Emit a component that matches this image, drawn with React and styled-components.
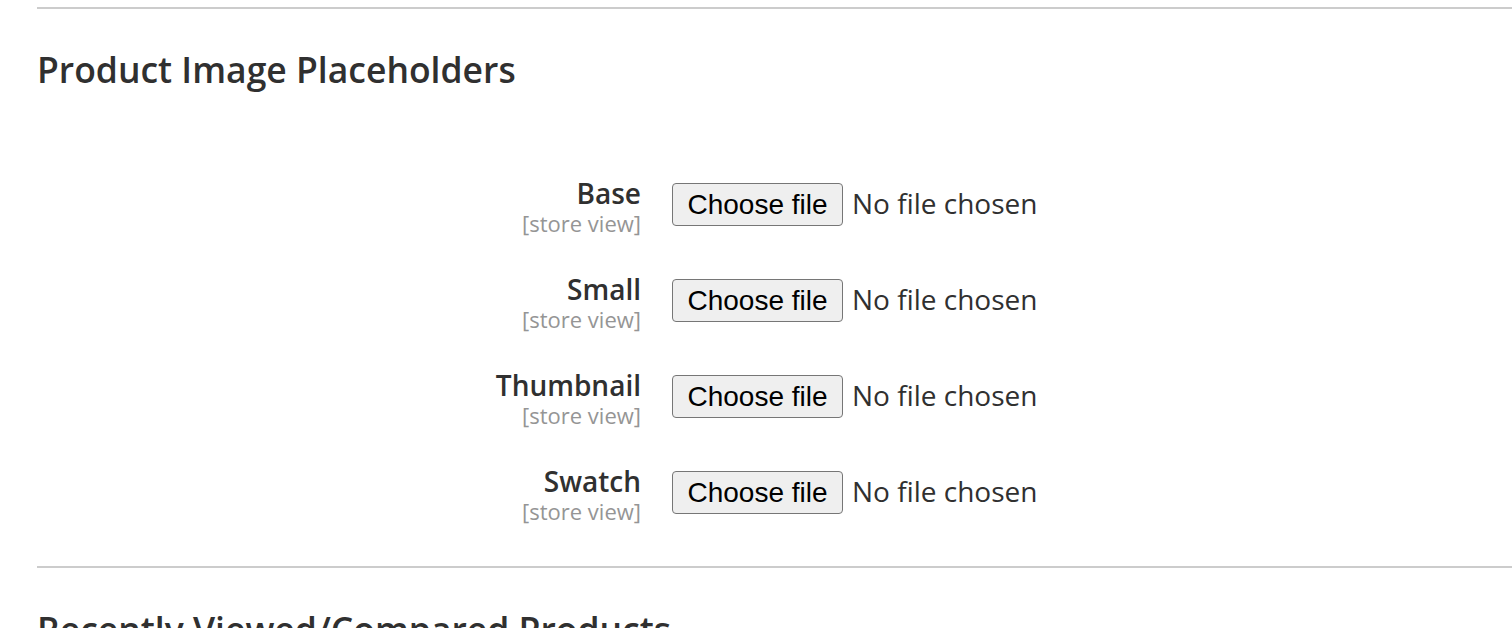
import React from 'react';
import styled, { createGlobalStyle } from 'styled-components';

const GlobalStyle = createGlobalStyle`
  html, body {
    margin: 0;
    padding: 0;
    background: #fff;
    font-family: "Open Sans", "Liberation Sans", sans-serif;
    color: #303030;
    overflow: hidden;
  }
`;

const Page = styled.div`
  padding: 7px 0 0 37px;
`;

const Divider = styled.hr`
  margin: 0;
  border: 0;
  border-top: 2px solid #cccccc;
`;

const Section = styled.section`
  padding: 0;
`;

const Title = styled.h3`
  margin: 0;
  padding-top: ${(p) => p.$top || 40}px;
  font-size: 35.5px;
  line-height: 40px;
  font-weight: 600;
  color: #303030;
  white-space: nowrap;
`;

const Fields = styled.div`
  display: flex;
  flex-direction: column;
  gap: 35px;
  padding: 88px 0 40px;
`;

const Row = styled.div`
  display: grid;
  grid-template-columns: 604px auto;
  column-gap: 31px;
  align-items: start;
`;

const Label = styled.div`
  display: flex;
  flex-direction: column;
  align-items: flex-end;
  padding-top: 1px;
  text-align: right;
`;

const LabelText = styled.span`
  font-size: 28px;
  line-height: 30px;
  font-weight: 600;
  color: #303030;
`;

const Scope = styled.span`
  font-size: 22px;
  line-height: 30px;
  color: #959595;
`;

const Control = styled.div`
  display: flex;
  align-items: center;
  gap: 9px;
  padding-top: 6px;
`;

const FileButton = styled.button`
  box-sizing: border-box;
  width: 171px;
  height: 43px;
  padding: 0;
  border: 1.5px solid #767676;
  border-radius: 4px;
  background: #efefef;
  font-family: "Liberation Sans", Arial, sans-serif;
  font-size: 28px;
  color: #000;
`;

const FileName = styled.span`
  font-family: "Open Sans", sans-serif;
  font-size: 28px;
  line-height: 38px;
  margin-bottom: 4px;
  color: #303030;
`;

const fields = ['Base', 'Small', 'Thumbnail', 'Swatch'];

export default function App() {
  return (
    <Page>
      <GlobalStyle />
      <Divider />
      <Section>
        <Title>Product Image Placeholders</Title>
        <Fields>
          {fields.map((name) => (
            <Row key={name}>
              <Label>
                <LabelText>{name}</LabelText>
                <Scope>[store view]</Scope>
              </Label>
              <Control>
                <FileButton type="button">Choose file</FileButton>
                <FileName>No file chosen</FileName>
              </Control>
            </Row>
          ))}
        </Fields>
      </Section>
      <Divider />
      <Title $top={41}>Recently Viewed/Compared Products</Title>
    </Page>
  );
}
